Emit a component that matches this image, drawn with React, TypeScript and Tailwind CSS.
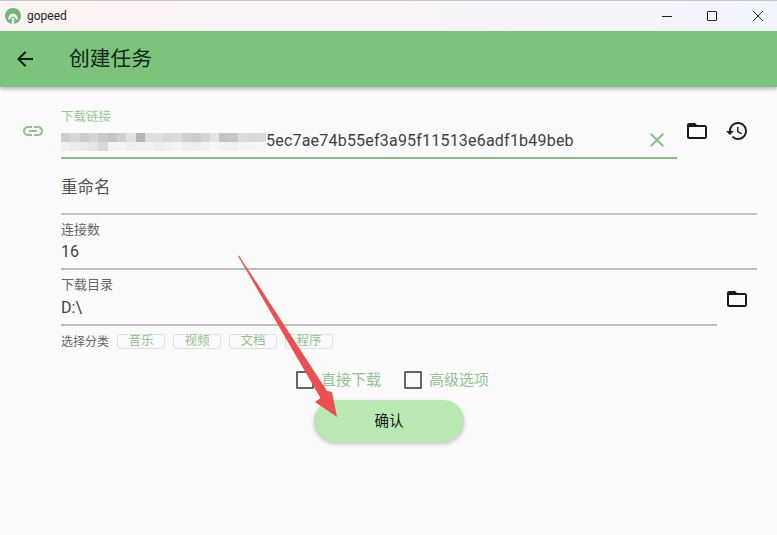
const FONT = "font-['Roboto','Noto_Sans_CJK_SC',sans-serif]";

// material icon outlines, same set the app uses
const ICONS = {
    back: "M20 11H7.830l5.590-5.590L12 4l-8 8 8 8 1.410-1.410L7.830 13H20v-2z",
    link: "M3.900 12c0-1.710 1.390-3.100 3.100-3.100h4V7H7c-2.760 0-5 2.240-5 5s2.240 5 5 5h4v-1.900H7c-1.710 0-3.100-1.390-3.100-3.100zM8 13h8v-2H8v2zm9-6h-4v1.900h4c1.710 0 3.100 1.390 3.100 3.100s-1.390 3.100-3.100 3.100h-4V17h4c2.760 0 5-2.240 5-5s-2.240-5-5-5z",
    close: "M19 6.410L17.590 5 12 10.590 6.410 5 5 6.410 10.590 12 5 17.590 6.410 19 12 13.410 17.590 19 19 17.590 13.410 12z",
    folder: "M20 6h-8l-2-2H4c-1.100 0-1.990.9-1.990 2L2 18c0 1.100.9 2 2 2h16c1.100 0 2-.9 2-2V8c0-1.100-.9-2-2-2zm0 12H4V8h16v10z",
    history:
        "M13 3c-4.970 0-9 4.030-9 9H1l3.890 3.890.07.14L9 12H6c0-3.870 3.130-7 7-7s7 3.130 7 7-3.130 7-7 7c-1.930 0-3.680-.79-4.940-2.060l-1.420 1.420C8.270 19.990 10.510 21 13 21c4.970 0 9-4.030 9-9s-4.030-9-9-9zm-1 5v5l4.280 2.540.72-1.210-3.500-2.080V8H12z",
};

function Icon({ d, className }: { d: string; className: string }) {
    return (
        <svg viewBox="0 0 24 24" fill="currentColor" className={`h-[24px] w-[24px] shrink-0 ${className}`} aria-hidden="true">
            <path d={d} />
        </svg>
    );
}

// greys for the mosaic that hides the start of the url
const MOSAIC_TOP = [
    "#cfcfcf", "#d8d8d8", "#cbcbcb", "#d5d5d5", "#c9c9c9", "#c4c4c4", "#d0d0d0", "#e2e2e2", "#b5b5b5", "#dedede",
    "#e0e0e0", "#d8d8d8", "#dcdcdc", "#d0d0d0", "#cccccc", "#d4d4d4", "#e4e4e4", "#c4c4c4", "#c8c8c8", "#dcdcdc",
    "#d8d8d8", "#dadada",
];
const MOSAIC_BOTTOM = [
    "#f0f0f0", "#ececec", "#e8e8e8", "#e4e4e4", "#d8d8d8", "#f2f2f2", "#f4f4f4", "#eeeeee", "#f0f0f0", "#f2f2f2",
    "#ececec", "#f0f0f0", "#f4f4f4", "#f0f0f0", "#eeeeee", "#f2f2f2", "#f6f6f6", "#f2f2f2", "#f0f0f0", "#f4f4f4",
    "#f4f4f4", "#f6f6f6",
];

function Mosaic() {
    return (
        <div className="mt-[3px] flex h-[18px] w-[205px] shrink-0 flex-col blur-[0.5px]">
            <div className="flex h-[9px]">
                {MOSAIC_TOP.map((c, i) => (
                    <span key={i} className="h-full flex-1" style={{ background: c }} />
                ))}
            </div>
            <div className="flex h-[9px]">
                {MOSAIC_BOTTOM.map((c, i) => (
                    <span key={i} className="h-full flex-1" style={{ background: c }} />
                ))}
            </div>
        </div>
    );
}

function Logo() {
    return (
        <svg width="16" height="16" viewBox="0 0 16 16" className="shrink-0" aria-hidden="true">
            <circle cx="8" cy="8" r="8" fill="#6fb57a" />
            <path d="M3 11.500C3.500 7.500 5.500 5.500 8 5.500s4.500 2 5 6h-2.200C10.400 9.500 9.400 8.500 8 8.500s-2.400 1-2.800 3z" fill="#f3f7f3" />
            <rect x="6.800" y="10" width="2.400" height="6" fill="#f3f7f3" />
        </svg>
    );
}

function WindowControls() {
    return (
        <div className="ml-auto mr-[14px] flex items-center gap-[35px] text-[#222]">
            <svg width="10" height="10" viewBox="0 0 10 10" fill="none" stroke="currentColor" aria-hidden="true">
                <path d="M0 5.500H10" />
            </svg>
            <svg width="10" height="10" viewBox="0 0 10 10" fill="none" stroke="currentColor" aria-hidden="true">
                <rect x="0.500" y="0.500" width="9" height="9" rx="0.500" />
            </svg>
            <svg width="10" height="10" viewBox="0 0 10 10" fill="none" stroke="currentColor" className="ml-[1px]" aria-hidden="true">
                <path d="M0 0L10 10M10 0L0 10" />
            </svg>
        </div>
    );
}

function TitleBar() {
    return (
        <div className="flex h-[31px] items-center border-t border-[#c8c8c8] bg-gradient-to-r from-[#fdf3f2] to-[#f2f4fc] pl-[5px]">
            <Logo />
            <span className="ml-[6px] text-[12px] text-[#222]">gopeed</span>
            <WindowControls />
        </div>
    );
}

function AppBar() {
    return (
        <div className="relative z-10 flex h-[56px] items-center bg-[#7cc47b] pl-[13px] shadow-[0_2px_4px_rgba(0,0,0,0.3)]">
            <Icon d={ICONS.back} className="text-[#0f1f10]" />
            <span className="ml-[32px] mt-[1px] text-[20.750px] text-[#10261a]">创建任务</span>
        </div>
    );
}

function UrlField() {
    return (
        <div className="ml-[21px] mr-[20px] mt-[22px] flex">
            <Icon d={ICONS.link} className="mt-[10px] text-[#8cc48d]" />
            <div className="ml-[16px] flex h-[50px] w-[616px] shrink-0 flex-col border-b-2 border-[#86c087]">
                <span className="mt-[1px] text-[12.500px] leading-[14px] text-[#9cc79c]">下载链接</span>
                <div className="relative mt-[7px] flex h-[19px] items-center">
                    <Mosaic />
                    <span className="text-[16px] leading-[19px] tracking-[0.21px] text-[#3f3f3f]">5ec7ae74b55ef3a95f11513e6adf1b49beb</span>
                    <Icon d={ICONS.close} className="absolute right-[8px] top-[-3px] text-[#86bf88]" />
                </div>
            </div>
            <Icon d={ICONS.folder} className="ml-[8px] mt-[10px] text-[#1a1a1a]" />
            <Icon d={ICONS.history} className="ml-[16px] mt-[10px] text-[#1f1f1f]" />
        </div>
    );
}

function Chip({ label }: { label: string }) {
    return (
        <span className="flex h-[15px] w-[48px] items-center justify-center rounded-[3px] border border-[#dfe3df] text-[12.500px] text-[#8fc28f]">
            {label}
        </span>
    );
}

function CheckOption({ label }: { label: string }) {
    return (
        <div className="flex items-center">
            <span className="h-[18px] w-[18px] rounded-[1px] border-2 border-[#666]" />
            <span className="ml-[7px] text-[15px] text-[#93c393]">{label}</span>
        </div>
    );
}

/** The red annotation arrow dropped on top of the screenshot. */
function Annotation() {
    return (
        <svg width="777" height="535" className="pointer-events-none absolute left-0 top-0" aria-hidden="true">
            <path d="M238 256L239 255.500L327 391L332 392L337 417L315 402L320.500 398z" fill="#ec4f50" />
        </svg>
    );
}

export default function App() {
    return (
        <div className={`relative h-[535px] w-[777px] overflow-hidden bg-[#fbfbfb] ${FONT}`}>
            <TitleBar />
            <AppBar />
            <UrlField />

            <div className="ml-[61px] mr-[20px] mt-[13px] flex h-[43px] items-start border-b-2 border-[#c4c4c4]">
                <span className="mt-[5px] text-[16.500px] leading-[22px] text-[#555]">重命名</span>
            </div>

            <div className="ml-[61px] mr-[20px] mt-[7px] flex h-[48px] flex-col border-b-2 border-[#bdbdbd]">
                <span className="text-[13px] leading-[15px] text-[#666]">连接数</span>
                <span className="mt-[5px] text-[16px] leading-[20px] text-[#444]">16</span>
            </div>

            <div className="ml-[61px] mr-[20px] mt-[7px] flex items-center">
                <div className="flex h-[49px] w-[656px] shrink-0 flex-col border-b-2 border-[#bdbdbd]">
                    <span className="text-[13px] leading-[15px] text-[#666]">下载目录</span>
                    <span className="mt-[6px] text-[16px] leading-[20px] text-[#444]">D:\</span>
                </div>
                <Icon d={ICONS.folder} className="ml-[8px] mt-[-6px] text-[#1a1a1a]" />
            </div>

            <div className="ml-[61px] mt-[8px] flex h-[15px] items-center">
                <span className="w-[56px] text-[12px] text-[#666]">选择分类</span>
                <div className="flex gap-[8px]">
                    <Chip label="音乐" />
                    <Chip label="视频" />
                    <Chip label="文档" />
                    <Chip label="程序" />
                </div>
            </div>

            <div className="ml-[296px] mt-[22px] flex h-[18px] items-center gap-[23px]">
                <CheckOption label="直接下载" />
                <CheckOption label="高级选项" />
            </div>

            <button
                type="button"
                className="ml-[314px] mt-[11px] flex h-[42px] w-[150px] items-center justify-center rounded-full bg-[#b9e8b2] pt-[2px] text-[14.500px] text-[#151515] shadow-[0_2px_4px_rgba(0,0,0,0.22)]"
            >
                确认
            </button>

            <Annotation />
        </div>
    );
}
